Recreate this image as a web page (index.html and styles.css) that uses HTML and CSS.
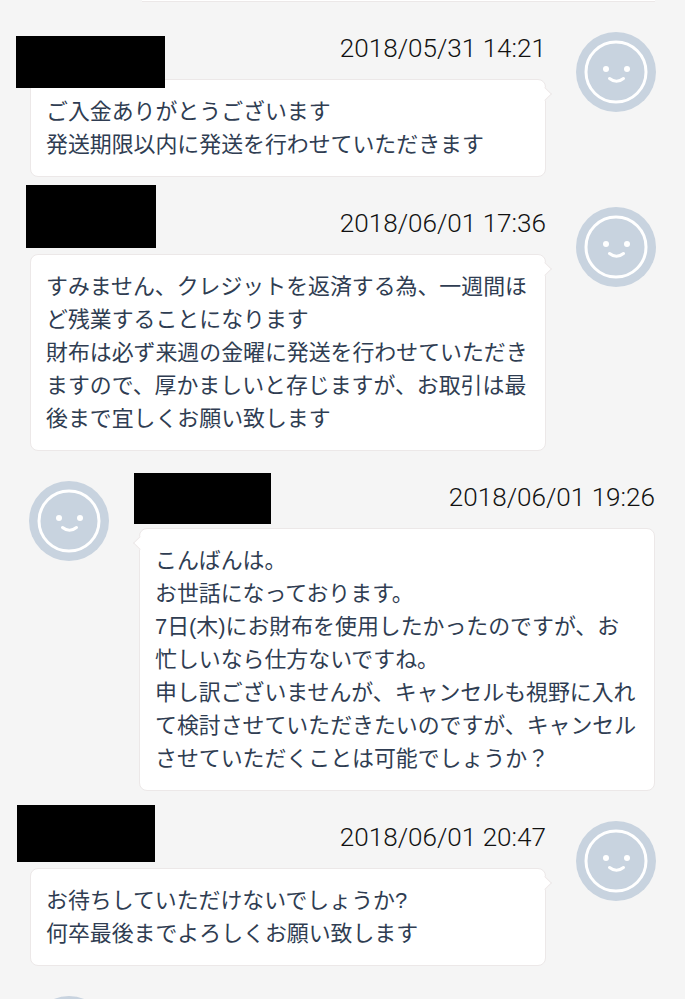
FILE: index.html
```html
<!DOCTYPE html>
<html lang="ja">
<head>
    <meta charset="UTF-8">
    <meta name="viewport" content="width=device-width, initial-scale=1.0">
    <title>取引メッセージ</title>
    <link rel="stylesheet" href="styles.css">
</head>
<body>
    <svg class="defs" width="0" height="0">
        <symbol id="face" viewBox="0 0 80 80">
            <circle cx="40" cy="40" r="40" fill="#c8d3df"/>
            <circle cx="40" cy="40" r="30" fill="none" stroke="#fff" stroke-width="3"/>
            <circle cx="30" cy="37" r="3" fill="#fff"/>
            <circle cx="51" cy="37" r="3" fill="#fff"/>
            <path d="M33.5 46.5 Q40.500 52 47.500 46.500" fill="none" stroke="#fff" stroke-width="3" stroke-linecap="round"/>
        </symbol>
    </svg>

    <div class="prev-bubble"></div>

    <div class="chat">
        <div class="msg sent">
            <div class="msg-body">
                <div class="time">2018/05/31 14:21</div>
                <div class="bubble">ご入金ありがとうございます<br>発送期限以内に発送を行わせていただきます</div>
            </div>
            <svg class="avatar"><use href="#face"/></svg>
            <div class="redact redact-1"></div>
        </div>

        <div class="msg sent">
            <div class="msg-body">
                <div class="time">2018/06/01 17:36</div>
                <div class="bubble">すみません、クレジットを返済する為、一週間ほ<br>ど残業することになります<br>財布は必ず来週の金曜に発送を行わせていただき<br>ますので、厚かましいと存じますが、お取引は最<br>後まで宜しくお願い致します</div>
            </div>
            <svg class="avatar"><use href="#face"/></svg>
            <div class="redact redact-2"></div>
        </div>

        <div class="msg received">
            <svg class="avatar"><use href="#face"/></svg>
            <div class="msg-body">
                <div class="time">2018/06/01 19:26</div>
                <div class="bubble">こんばんは。<br>お世話になっております。<br>7日(木)にお財布を使用したかったのですが、お<br>忙しいなら仕方ないですね。<br>申し訳ございませんが、キャンセルも視野に入れ<br>て検討させていただきたいのですが、キャンセル<br>させていただくことは可能でしょうか？</div>
            </div>
            <div class="redact redact-3"></div>
        </div>

        <div class="msg sent">
            <div class="msg-body">
                <div class="time">2018/06/01 20:47</div>
                <div class="bubble">お待ちしていただけないでしょうか?<br>何卒最後までよろしくお願い致します</div>
            </div>
            <svg class="avatar"><use href="#face"/></svg>
            <div class="redact redact-4"></div>
        </div>

        <div class="msg received peek">
            <svg class="avatar"><use href="#face"/></svg>
        </div>
    </div>
</body>
</html>
```

FILE: styles.css
```css
/* General Styles */
html, body {
    height: 999px;
    overflow: hidden;
}

body {
    margin: 0;
    background: #f5f5f5;
    color: #2f3d52;
    font-family: "Liberation Sans", "Noto Sans CJK JP", sans-serif;
}

.defs {
    position: absolute;
}

.prev-bubble {
    height: 1px;
    margin-left: 142px;
    margin-right: 30px;
    background: #fff;
    border-bottom: 1px solid #ece8e8;
}

.chat {
    display: flex;
    flex-direction: column;
    gap: 30px;
    padding: 30px 29px 0 30px;
}

.msg {
    position: relative;
    display: flex;
    gap: 30px;
}

.sent {
    justify-content: flex-end;
}

.peek {
    height: 3px;
    overflow: hidden;
}

.msg-body {
    width: 516px;
    flex: none;
}

.avatar {
    width: 80px;
    height: 80px;
    flex: none;
}

.received .avatar {
    margin-left: -1px;
}

.time {
    height: 47px;
    padding-top: 1px;
    box-sizing: border-box;
    text-align: right;
    font-family: Roboto, "Liberation Sans", sans-serif;
    font-size: 26.100px;
    font-weight: 300;
    line-height: 30px;
    color: #111;
}

.bubble {
    position: relative;
    padding: 15px 15px 15px 15px;
    background: #fff;
    border: 1px solid #ece8e8;
    border-radius: 8px;
    font-size: 21.900px;
    line-height: 33px;
    white-space: nowrap;
}

.bubble::after {
    content: "";
    position: absolute;
    top: 9px;
    width: 9px;
    height: 9px;
    background: #fff;
    transform: rotate(45deg);
}

.sent .bubble::after {
    right: -5px;
    border-top: 1px solid #ece8e8;
    border-right: 1px solid #ece8e8;
}

.received .bubble::after {
    left: -5px;
    border-bottom: 1px solid #ece8e8;
    border-left: 1px solid #ece8e8;
}

/* black boxes laid over the names */
.redact {
    position: absolute;
    background: #000;
}

.redact-1 {
    left: -14px;
    top: 4px;
    width: 149px;
    height: 52px;
}

.redact-2 {
    left: -4px;
    top: -22px;
    width: 130px;
    height: 63px;
}

.redact-3 {
    left: 104px;
    top: -8px;
    width: 137px;
    height: 51px;
}

.redact-4 {
    left: -13px;
    top: -16px;
    width: 138px;
    height: 57px;
}
```
